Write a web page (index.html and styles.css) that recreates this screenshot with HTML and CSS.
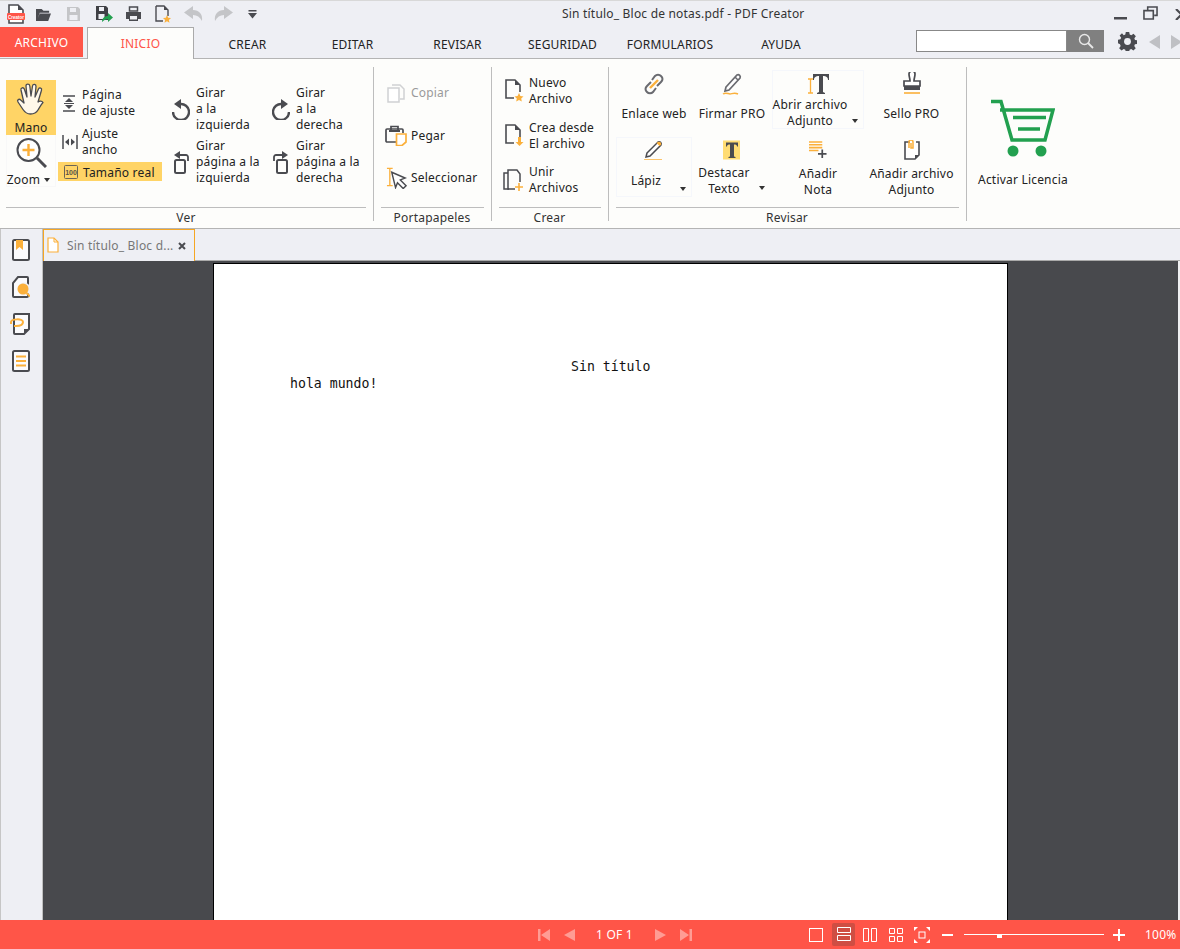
FILE: index.html
```html
<!DOCTYPE html>
<html lang="es">
<head>
<meta charset="utf-8">
<title>PDF Creator</title>
<link rel="stylesheet" href="styles.css">
</head>
<body>
<div class="app">
  <header class="titlebar">
    <div class="qat">
      <svg class="q1" viewBox="0 0 18 20"><path d="M2 1h9l5 5v13H2z" fill="#fff" stroke="#4a4b50" stroke-width="1.600"/><path d="M11 1v5h5z" fill="#4a4b50"/><rect x="0" y="9" width="18" height="7" rx="1" fill="#ff5548"/><text x="9" y="14.500" class="logo-t">Creator</text></svg>
      <svg class="q2" viewBox="0 0 18 16"><path d="M1 15V2h6l2 2h6v2H5L3 12l2-5h12l-3 8z" fill="#4a4b50"/></svg>
      <svg class="q3" viewBox="0 0 15 16"><path d="M1 1h11l2 2v12H1z" fill="#c4c5c8"/><rect x="4" y="2" width="6" height="4" fill="#eeeff4"/><rect x="3.500" y="9" width="8" height="5" fill="#eeeff4"/></svg>
      <svg class="q4" viewBox="0 0 18 18"><path d="M1 1h10l2 2v12H1z" fill="#3f4045"/><rect x="4" y="2" width="5" height="4" fill="#eeeff4"/><rect x="3.500" y="9" width="6" height="5" fill="#eeeff4"/><path d="M7 17c0-4 3-6 6-6V8l5 4.500-5 4.500v-3c-2 0-4 1-6 3z" fill="#22a04f"/></svg>
      <svg class="q5" viewBox="0 0 15 16"><rect x="3.500" y="1" width="8" height="4" fill="none" stroke="#4a4b50" stroke-width="1.500"/><path d="M0 6h15v7h-3v2H3v-2H0z" fill="#4a4b50"/><rect x="4" y="10" width="7" height="3.500" fill="#eeeff4"/></svg>
      <svg class="q6" viewBox="0 0 16 19"><path d="M1 1h8l4 4v6M8 16H1V1" fill="none" stroke="#4a4b50" stroke-width="1.400"/><path d="M9 5V1l4 4z" fill="#4a4b50"/><path d="M12 10l1.200 2.700 2.800.3-2.100 1.900.6 2.900-2.500-1.500-2.500 1.500.6-2.900L8 13l2.800-.3z" fill="#fbb03b"/></svg>
      <svg class="q7" viewBox="0 0 19 16"><path d="M9 0L0 6.500 9 13V9c4 0 7 2 9 6 1-7-3-11-9-11z" fill="#c4c5c8"/></svg>
      <svg class="q8" viewBox="0 0 19 16"><path d="M10 0l9 6.500L10 13V9c-4 0-7 2-9 6-1-7 3-11 9-11z" fill="#c4c5c8"/></svg>
      <svg class="q9" viewBox="0 0 9 9"><rect x="0.500" y="0" width="8" height="1.500" fill="#4a4b50"/><path d="M0 3h9L4.500 8.500z" fill="#4a4b50"/></svg>
    </div>
    <div class="doc-title">Sin título_ Bloc de notas.pdf - PDF Creator</div>
    <div class="winctl">
      <svg class="wmin" viewBox="0 0 13 3"><rect width="13" height="2.500" fill="#4a4b50"/></svg>
      <svg class="wres" viewBox="0 0 16 15"><path d="M1 5h10v9H1zM5 4V1h10v9h-3" fill="none" stroke="#4a4b50" stroke-width="1.700"/></svg>
      <svg class="wcls" viewBox="0 0 13 11"><path d="M1 0l11 11M12 0L1 11" stroke="#4a4b50" stroke-width="2.200"/></svg>
    </div>
  </header>

  <nav class="tabs">
    <div class="tab-file">ARCHIVO</div>
    <div class="tab-active">INICIO</div>
    <div class="tab t105 first">CREAR</div>
    <div class="tab t105">EDITAR</div>
    <div class="tab t105">REVISAR</div>
    <div class="tab t105">SEGURIDAD</div>
    <div class="tab t110">FORMULARIOS</div>
    <div class="tab t112">AYUDA</div>
    <div class="search">
      <div class="search-input"></div>
      <div class="search-btn"><svg viewBox="0 0 16 16"><circle cx="6.500" cy="6.500" r="5" fill="none" stroke="#e8e8e8" stroke-width="1.400"/><path d="M10 10l5 5" stroke="#e8e8e8" stroke-width="1.800"/></svg></div>
    </div>
    <svg class="gear" viewBox="0 0 20 20"><path d="M8.200 0h3.600l.5 2.700 1.700.7 2.300-1.500 2.500 2.500-1.600 2.300.7 1.700 2.600.5v3.600l-2.700.5-.7 1.700 1.600 2.300-2.500 2.500-2.300-1.600-1.700.7-.5 2.700H8.200l-.5-2.700-1.700-.7-2.300 1.600-2.500-2.500 1.600-2.300-.7-1.700L-.1 11.800V8.200l2.700-.5.7-1.700-1.600-2.300 2.500-2.500L6 3.400l1.700-.7z" fill="#4a4b50"/><circle cx="10" cy="10" r="3.600" fill="#eeeff4"/></svg>
    <svg class="arrow" viewBox="0 0 11 14"><path d="M11 0v14L0 7z" fill="#bfc0c4"/></svg>
    <svg class="arrow arrow-r" viewBox="0 0 11 14"><path d="M0 0v14l11-7z" fill="#bfc0c4"/></svg>
  </nav>

  <section class="ribbon">
    <div class="group g-ver">
      <div class="g-body ver-body">
        <div class="ver-c1">
          <div class="big-btn mano">
            <svg class="i-hand" viewBox="0 0 30 32"><path d="M8 20L5 7c-.5-2.500 2.500-3 3.300-1l2.700 8-1-11c0-2.500 3.500-2.500 3.800 0l1.200 10 1.500-10c.4-2.300 3.700-2 3.500.5L19 14l3.500-8c1-2 3.700-1 3 1.200L22 19c1.500-1.500 4-1 5 .5-2 2-3.500 5-5 7.500-1.500 2.500-4 4-7.500 4-3 0-5.500-1.500-7.500-4.500L2 19c-1.300-2 1-3.700 2.700-2z" fill="#fff8ea" stroke="#4a4b50" stroke-width="1.300" stroke-linejoin="round"/></svg>
            <span>Mano</span>
          </div>
          <div class="big-btn zoom">
            <svg class="i-zoom" viewBox="0 0 31 30"><circle cx="12.500" cy="12" r="11" fill="#fff" stroke="#4a4b50" stroke-width="2"/><path d="M21 20l9 9" stroke="#4a4b50" stroke-width="3"/><path d="M12.500 6v12M6.500 12h12" stroke="#fbb03b" stroke-width="2.400"/></svg>
            <span class="zoom-label">Zoom<i class="caret"></i></span>
          </div>
        </div>
        <div class="ver-c2">
          <div class="row r-pagina">
            <svg class="ic-fit" viewBox="0 0 14 17"><path d="M1 1h12M1 16h12" stroke="#4a4b50" stroke-width="1.500"/><path d="M7 3l4 4H3zM7 14l4-4H3z" fill="#4a4b50"/><path d="M2 8.500h10" stroke="#4a4b50"/></svg>
            <span>Página<br>de ajuste</span>
          </div>
          <div class="row r-ancho">
            <svg class="ic-width" viewBox="0 0 16 14"><path d="M1 0v14M15 0v14" stroke="#4a4b50" stroke-width="1.500"/><path d="M3 7l4-3.500v7zM13 7l-4-3.500v7z" fill="#4a4b50"/></svg>
            <span>Ajuste<br>ancho</span>
          </div>
          <div class="row r-real">
            <svg class="ic-100" viewBox="0 0 14 14"><rect x="0.500" y="0.500" width="13" height="13" rx="1" fill="none" stroke="#6b6456"/><text x="7" y="9.500" class="t100">100</text></svg>
            <span>Tamaño real</span>
          </div>
        </div>
        <div class="ver-c3">
          <div class="row rot">
            <svg class="ic-rot" viewBox="0 0 18 21"><path d="M8 5a8 8 0 1 1-7 8" fill="none" stroke="#4a4b50" stroke-width="2.400"/><path d="M9 0v10L2 5z" fill="#4a4b50"/></svg>
            <span>Girar<br>a la<br>izquierda</span>
          </div>
          <div class="row rot">
            <svg class="ic-rotp" viewBox="0 0 18 24"><rect x="3" y="10" width="10" height="13" rx="1.500" fill="none" stroke="#4a4b50" stroke-width="2"/><path d="M16 11V7a2 2 0 0 0-2-2H7" fill="none" stroke="#4a4b50" stroke-width="1.800"/><path d="M8 1v8L2 5z" fill="#4a4b50"/></svg>
            <span>Girar<br>página a la<br>izquierda</span>
          </div>
        </div>
        <div class="ver-c4">
          <div class="row rot">
            <svg class="ic-rot" viewBox="0 0 18 21"><path d="M10 5a8 8 0 1 0 7 8" fill="none" stroke="#4a4b50" stroke-width="2.400"/><path d="M9 0v10l7-5z" fill="#4a4b50"/></svg>
            <span>Girar<br>a la<br>derecha</span>
          </div>
          <div class="row rot">
            <svg class="ic-rotp" viewBox="0 0 18 24"><rect x="5" y="10" width="10" height="13" rx="1.500" fill="none" stroke="#4a4b50" stroke-width="2"/><path d="M2 11V7a2 2 0 0 1 2-2h7" fill="none" stroke="#4a4b50" stroke-width="1.800"/><path d="M10 1v8l6-4z" fill="#4a4b50"/></svg>
            <span>Girar<br>página a la<br>derecha</span>
          </div>
        </div>
      </div>
      <div class="g-label">Ver</div>
    </div>

    <div class="group g-port">
      <div class="g-body port-body">
        <div class="row r-copy disabled">
          <svg class="ic-copy" viewBox="0 0 18 19"><path d="M5 1h8l4 4v10h-4" fill="none" stroke="#d0d1d3" stroke-width="1.500"/><path d="M1 4h11v14H1z" fill="#fff" stroke="#d0d1d3" stroke-width="1.500"/></svg>
          <span>Copiar</span>
        </div>
        <div class="row r-paste">
          <svg class="ic-paste" viewBox="0 0 22 21"><path d="M11 17H2a1 1 0 0 1-1-1V5a1 1 0 0 1 1-1h15a1 1 0 0 1 1 1v3" fill="none" stroke="#4a4b50" stroke-width="1.700"/><path d="M6 5V1.500h7V5" fill="none" stroke="#4a4b50" stroke-width="1.700"/><rect x="4" y="5" width="11" height="2" fill="#4a4b50"/><path d="M11.500 9H21v8l-4 3.500h-5.500z" fill="#fff" stroke="#fbb03b" stroke-width="1.700"/></svg>
          <span>Pegar</span>
        </div>
        <div class="row r-sel">
          <svg class="ic-sel" viewBox="0 0 23 22"><path d="M1 1h6M1 19h6M4 1v18" stroke="#fbb03b" stroke-width="1.400" fill="none"/><path d="M6 5l14 6-5 2 6 6-3 3-6-6-2 5z" fill="#fff" stroke="#4a4b50" stroke-width="1.500"/></svg>
          <span>Seleccionar</span>
        </div>
      </div>
      <div class="g-label">Portapapeles</div>
    </div>

    <div class="group g-crear">
      <div class="g-body crear-body">
        <div class="row r-new">
          <svg class="ic-new" viewBox="0 0 20 24"><path d="M9 19H1V1h9l5 5v7" fill="none" stroke="#4a4b50" stroke-width="1.600"/><path d="M10 1v5h5z" fill="#4a4b50"/><path d="M14 14l1.400 3 3.100.4-2.300 2.100.6 3.100-2.800-1.600-2.800 1.600.6-3.100-2.300-2.100 3.100-.4z" fill="#fbb03b"/></svg>
          <span>Nuevo<br>Archivo</span>
        </div>
        <div class="row r-from">
          <svg class="ic-new" viewBox="0 0 20 24"><path d="M9 19H1V1h9l5 5v13h-1" fill="none" stroke="#4a4b50" stroke-width="1.600"/><path d="M10 1v5h5z" fill="#4a4b50"/><path d="M13 13h3v5h2.500l-4 4-4-4H13z" fill="#fbb03b"/></svg>
          <span>Crea desde<br>El archivo</span>
        </div>
        <div class="row r-join">
          <svg class="ic-join" viewBox="0 0 21 23"><path d="M6 20H1V4h4" fill="none" stroke="#4a4b50" stroke-width="1.500"/><path d="M12 20H5V1h9l3 4v8" fill="none" stroke="#4a4b50" stroke-width="1.500"/><path d="M16 14v8M12 18h8" stroke="#fbb03b" stroke-width="1.600"/></svg>
          <span>Unir<br>Archivos</span>
        </div>
      </div>
      <div class="g-label">Crear</div>
    </div>

    <div class="group g-rev">
      <div class="g-body rev-body">
        <div class="tool gap9">
          <svg class="ic-t" viewBox="0 0 24 24"><path d="M10 8l3-4a4 4 0 0 1 6 0c2 2 2 4 0 6l-4 4M14 16l-3 4a4 4 0 0 1-6 0c-2-2-2-4 0-6l4-4" fill="none" stroke="#6a6b70" stroke-width="2"/><path d="M8 16l8-8" stroke="#fbb03b" stroke-width="2.400"/></svg>
          <span>Enlace web</span>
        </div>
        <div class="tool gap9">
          <svg class="ic-t" viewBox="0 0 24 24"><path d="M6 15L17 3c2-1 4 1 3 3L9 18l-4 1z" fill="#fff" stroke="#6a6b70" stroke-width="1.700"/><path d="M15 5l3 3" stroke="#6a6b70" stroke-width="1.500"/><path d="M3 22c3-2 5 0 7 0s4-2 8 0" fill="none" stroke="#fbb03b" stroke-width="1.500"/></svg>
          <span>Firmar PRO</span>
        </div>
        <div class="tool gap1 boxed">
          <svg class="ic-t ic-wide" viewBox="0 0 22 24"><path d="M1 7h5M1 21h5M3.500 7v14" stroke="#fbb03b" stroke-width="1.300" fill="none"/><path d="M6 2h16v6h-1c0-3-2-4-5-4v16l2 1v1h-8v-1l2-1V4C9 4 7 5 7 8H6z" fill="#4a4b50"/></svg>
          <span class="off8">Abrir archivo<br>Adjunto</span>
          <i class="caret drop"></i>
        </div>
        <div class="tool gap9">
          <svg class="ic-t" viewBox="0 0 24 24"><path d="M9 2a3 3 0 0 1 6 0c0 3-1 4-1 7h6v5H4V9h6c0-3-1-4-1-7z" fill="#fff" stroke="#4a4b50" stroke-width="1.700"/><rect x="4" y="14" width="16" height="4" fill="#4a4b50"/><path d="M4 21h16" stroke="#fbb03b" stroke-width="1.600"/></svg>
          <span>Sello PRO</span>
        </div>
        <div class="tool boxed gap-pen">
          <svg class="ic-pen" viewBox="0 0 20 20"><path d="M3 13L14 2c2-1 4 1 3 3L6 16l-4 1z" fill="#fff" stroke="#4a4b50" stroke-width="1.500"/><path d="M14 2c2-1 4 1 3 3l-1.500 1-3-3z" fill="#fbb03b"/><path d="M0 20h18" stroke="#fbb03b" stroke-width="1.500"/></svg>
          <span class="shift">Lápiz</span>
          <i class="caret drop2"></i>
        </div>
        <div class="tool gap4">
          <svg class="ic-hl" viewBox="0 0 18 19"><rect width="17" height="19" fill="#ffdc73"/><path d="M3 2h12v4h-1c0-1.500-1-2-3-2v12l1.500.5v1h-7v-1L7 16V4C5 4 4 4.500 4 6H3z" fill="#4a4b50"/></svg>
          <span class="off8">Destacar<br>Texto</span>
          <i class="caret drop3"></i>
        </div>
        <div class="tool gap5">
          <svg class="ic-hl" viewBox="0 0 19 19"><path d="M0 1h14M0 4h14M0 7h14M0 10h10" stroke="#fbb03b" stroke-width="1.600"/><path d="M14 9v9M9.500 13.500h9" stroke="#4a4b50" stroke-width="1.800"/></svg>
          <span>Añadir<br>Nota</span>
        </div>
        <div class="tool gap5">
          <svg class="ic-hl" viewBox="0 0 16 20"><path d="M6 2H1v17h10l4-4V2h-3" fill="#fff" stroke="#4a4b50" stroke-width="1.600"/><path d="M5 8V2a2 2 0 0 1 4 0v6h-2V3" fill="none" stroke="#fbb03b" stroke-width="1.500"/><path d="M11 19v-4h4z" fill="#4a4b50"/></svg>
          <span>Añadir archivo<br>Adjunto</span>
        </div>
      </div>
      <div class="g-label">Revisar</div>
    </div>

    <div class="group-last">
      <svg class="ic-cart" viewBox="0 0 64 58"><path d="M0 2.500h10L21 41h33l8-30H9" fill="none" stroke="#22a04f" stroke-width="3.500"/><path d="M22 18.500h33M27 30h22" stroke="#22a04f" stroke-width="3.500"/><circle cx="22" cy="52" r="5.500" fill="#22a04f"/><circle cx="50" cy="52" r="5.500" fill="#22a04f"/></svg>
      <span>Activar Licencia</span>
    </div>
  </section>

  <div class="workspace">
    <aside class="sidebar">
      <svg class="side-i" viewBox="0 0 20 22"><rect x="3" y="1" width="16" height="20" rx="1.500" fill="#fbfbfd" stroke="#4a4b50" stroke-width="2"/><path d="M6 1h7v10l-3.500-3L6 11z" fill="#fbb03b"/></svg>
      <svg class="side-i" viewBox="0 0 20 22"><path d="M8 1h9a1 1 0 0 1 1 1v18a1 1 0 0 1-1 1H4a1 1 0 0 1-1-1V7z" fill="#fbfbfd" stroke="#4a4b50" stroke-width="2"/><circle cx="14" cy="13" r="6.500" fill="#eeeff4"/><circle cx="13" cy="13" r="5.500" fill="#fbb03b"/><path d="M16.500 17l3.500 3.500" stroke="#fbb03b" stroke-width="2"/></svg>
      <svg class="side-i" viewBox="0 0 20 22"><path d="M5 1h14v15l-5 5H5a1 1 0 0 1-1-1V2a1 1 0 0 1 1-1z" fill="#fbfbfd" stroke="#4a4b50" stroke-width="2"/><path d="M14 21v-5h5z" fill="#4a4b50"/><path d="M1 11V9c0-3 12-4 12 0 0 3-4 4-7 4H4" fill="none" stroke="#fbb03b" stroke-width="2"/></svg>
      <svg class="side-i" viewBox="0 0 20 22"><rect x="3" y="1" width="16" height="20" rx="1.500" fill="#fbfbfd" stroke="#4a4b50" stroke-width="2"/><path d="M6 6.500h10M6 11h10M6 15.500h10" stroke="#fbb03b" stroke-width="2"/></svg>
    </aside>
    <div class="doc-col">
      <div class="docstrip">
        <div class="doctab">
          <svg class="doctab-i" viewBox="0 0 12 16"><path d="M1 1h6l4 4v10H1z" fill="#fff" stroke="#fbb03b" stroke-width="1.200"/><path d="M7 1v4h4" fill="none" stroke="#fbb03b"/></svg>
          <span class="doctab-t">Sin título_ Bloc d...</span>
          <svg class="doctab-x" viewBox="0 0 8 8"><path d="M1 1l6 6M7 1L1 7" stroke="#4a4b50" stroke-width="2"/></svg>
        </div>
      </div>
      <main class="viewer">
        <div class="page">
          <div class="pg-title">Sin título</div>
          <div class="pg-line">hola mundo!</div>
        </div>
      </main>
    </div>
  </div>

  <footer class="status">
    <div class="nav-pages">
      <svg class="nv" viewBox="0 0 12 12"><path d="M0 0h2.500v12H0zM12 0v12L3 6z" fill="#ff9c94"/></svg>
      <svg class="nv nv2" viewBox="0 0 11 12"><path d="M11 0v12L0 6z" fill="#ff9c94"/></svg>
      <span class="pg-num">1 OF 1</span>
      <svg class="nv nv3" viewBox="0 0 11 12"><path d="M0 0v12l11-6z" fill="#ff9c94"/></svg>
      <svg class="nv nv4" viewBox="0 0 12 12"><path d="M12 0H9.500v12H12zM0 0v12l9-6z" fill="#ff9c94"/></svg>
    </div>
    <div class="view-btns">
      <svg class="vb v1" viewBox="0 0 14 14"><rect x="0.500" y="0.500" width="13" height="13" fill="none" stroke="#fff"/></svg>
      <span class="vb-on"><svg class="vb" viewBox="0 0 14 14"><path d="M.5.500h13v5H.5zM.5 8.500h13v5H.5z" fill="none" stroke="#fff"/></svg></span>
      <svg class="vb v3" viewBox="0 0 14 14"><path d="M.5.500h5v13h-5zM8.500.500h5v13h-5z" fill="none" stroke="#fff"/></svg>
      <svg class="vb v4" viewBox="0 0 14 14"><path d="M.5.500h5v5h-5zM8.500.500h5v5h-5zM.5 8.500h5v5h-5zM8.500 8.500h5v5h-5z" fill="none" stroke="#fff"/></svg>
      <svg class="vb v5" viewBox="0 0 16 16"><path d="M0 0h4L0 4zM16 0h-4l4 4zM0 16h4l-4-4zM16 16h-4l4-4z" fill="#fff"/><rect x="5" y="5" width="6" height="6" fill="none" stroke="#fff"/></svg>
    </div>
    <div class="zoomer">
      <span class="z-minus"></span>
      <div class="z-track"><span class="z-thumb"></span></div>
      <span class="z-plus"></span>
      <span class="z-val">100%</span>
    </div>
  </footer>
</div>
</body>
</html>
```

FILE: styles.css
```css
* { box-sizing: border-box; }
html, body { margin: 0; padding: 0; }
body { width: 1180px; height: 949px; overflow: hidden; font: 12px/16px "Noto Sans", sans-serif; letter-spacing: .2px; color: #222; background: #eeeff4; }
svg { display: block; flex: none; }
.app { display: flex; flex-direction: column; height: 949px; }
.logo-t { font: bold 4.500px "Liberation Sans", sans-serif; fill: #fff; text-anchor: middle; letter-spacing: 0; }
.t100 { font: bold 7px "Liberation Sans", sans-serif; fill: #5a5346; text-anchor: middle; letter-spacing: 0; }

.titlebar { height: 27px; display: flex; align-items: center; border-top: 1px solid #d8d8d8; background: #eeeff4; }
.qat { display: flex; align-items: center; padding-left: 7px; width: 562px; }
.q1 { width: 18px; height: 20px; margin-right: 10px; }
.q2 { width: 17px; height: 15px; margin-right: 14px; }
.q3 { width: 15px; height: 16px; margin-right: 14px; }
.q4 { width: 18px; height: 18px; margin-right: 13px; }
.q5 { width: 15px; height: 16px; margin-right: 14px; }
.q6 { width: 16px; height: 19px; margin-right: 13px; }
.q7 { width: 19px; height: 16px; margin-right: 11px; }
.q8 { width: 19px; height: 16px; margin-right: 15px; }
.q9 { width: 9px; height: 9px; }
.doc-title { width: 241px; white-space: nowrap; color: #333; }
.winctl { margin-left: auto; display: flex; align-items: center; }
.wmin { width: 13px; height: 3px; margin: 8px 16px 0 0; }
.wres { width: 15px; height: 14px; margin: -3px 17px 0 0; }
.wcls { width: 13px; height: 11px; margin-right: -8px; }

.tabs { height: 32px; display: flex; background: #eeeff4; border-bottom: 1px solid #b4b4b4; align-items: flex-start; }
.tab-file { width: 83px; height: 30px; background: #ff5548; color: #fff; text-align: center; line-height: 31px; }
.tab-active { width: 107px; height: 32px; margin-left: 4px; background: #fdfdfb; color: #ff5548; border: 1px solid #aaa; border-bottom: 0; text-align: center; line-height: 32px; }
.tab { text-align: center; line-height: 36px; color: #222; flex: none; }
.first { margin-left: 1px; }
.t105 { width: 105px; }
.t110 { width: 110px; }
.t112 { width: 112px; }
.search { display: flex; margin: 3px 0 0 auto; width: 188px; height: 22px; }
.search-input { flex: 1; background: #fff; border: 1px solid #888; }
.search-btn { width: 37px; background: #808080; display: flex; align-items: center; justify-content: center; }
.search-btn svg { width: 16px; height: 16px; }
.gear { width: 19px; height: 19px; margin: 5px 0 0 14px; }
.arrow { width: 11px; height: 14px; margin: 8px 0 0 12px; }
.arrow-r { margin-left: 11px; margin-right: -2px; }

.ribbon { height: 170px; background: #fdfdfb; display: flex; padding-top: 8px; border-bottom: 1px solid #b4b4b4; }
.group { height: 154px; padding: 0 7px 0 6px; border-right: 1px solid #bdbdbd; display: flex; flex-direction: column; }
.g-ver { width: 374px; }
.g-port { width: 118px; }
.g-crear { width: 117px; }
.g-rev { width: 358px; }
.g-body { height: 141px; border-bottom: 1px solid #bdbdbd; }
.g-label { text-align: center; height: 13px; line-height: 20px; color: #333; }
.row { display: flex; align-items: center; }

.ver-body { display: flex; width: 360px; }
.ver-c1 { width: 52px; padding-top: 13px; }
.ver-c2 { width: 112px; padding-top: 20px; }
.ver-c3 { width: 100px; padding-top: 18px; display: flex; flex-direction: column; gap: 5px; }
.ver-c4 { width: 96px; padding-top: 18px; display: flex; flex-direction: column; gap: 5px; }
.big-btn { width: 50px; display: flex; flex-direction: column; align-items: center; }
.mano { height: 55px; background: #ffd466; padding-top: 3px; }
.mano span { margin-top: 1px; }
.i-hand { width: 30px; height: 32px; margin-bottom: 4px; }
.zoom { height: 52px; padding-top: 3px; border: 1px solid #f8f8f8; border-top: 0; }
.i-zoom { width: 31px; height: 30px; margin: 0 0 4px 0; }
.zoom-label { display: flex; align-items: center; margin-right: 5px; }
.caret { display: inline-block; width: 0; height: 0; border: 3.500px solid transparent; border-top: 4px solid #333; border-bottom: 0; margin-left: 4px; }
.r-pagina { height: 32px; padding-left: 4px; }
.r-pagina span { margin-left: 6px; }
.ic-fit { width: 14px; height: 17px; }
.r-ancho { height: 32px; margin-top: 7px; padding-left: 4px; }
.r-ancho span { margin-left: 4px; }
.ic-width { width: 16px; height: 14px; }
.r-real { width: 104px; height: 19px; margin-top: 4px; background: #ffd466; padding-left: 6px; }
.ic-100 { width: 14px; height: 14px; }
.r-real span { margin: 3px 0 0 5px; color: #222; }
.rot { height: 48px; padding-left: 2px; }
.rot span { margin-left: 6px; }
.ic-rot { width: 18px; height: 21px; }
.ic-rotp { width: 18px; height: 24px; }

.port-body { width: 103px; margin-left: 1px; padding-top: 17px; display: flex; flex-direction: column; }
.r-copy { height: 18px; padding-left: 6px; }
.r-copy span { margin-left: 6px; color: #9a9a9a; }
.ic-copy { width: 18px; height: 19px; }
.r-paste { height: 21px; margin-top: 23px; padding-left: 4px; }
.r-paste span { margin-left: 4px; }
.ic-paste { width: 22px; height: 21px; }
.r-sel { height: 22px; margin-top: 21px; padding-left: 5px; }
.r-sel span { margin-left: 3px; }
.ic-sel { width: 22px; height: 22px; }

.crear-body { width: 102px; margin-left: 1px; padding-top: 8px; display: flex; flex-direction: column; }
.r-new { height: 32px; padding-left: 6px; }
.r-new span { margin-left: 4px; }
.r-from { height: 32px; margin-top: 13px; padding-left: 6px; }
.r-from span { margin-left: 4px; }
.ic-new { width: 20px; height: 24px; }
.r-join { height: 32px; margin-top: 12px; padding-left: 4px; }
.r-join span { margin-left: 5px; }
.ic-join { width: 21px; height: 23px; }

.rev-body { width: 343px; margin-left: 1px; padding-top: 3px; display: grid; grid-template-columns: 76px 80px 92px 95px; grid-template-rows: 59px 60px; row-gap: 8px; }
.tool { position: relative; display: flex; flex-direction: column; align-items: center; text-align: center; padding-top: 2px; white-space: nowrap; }
.boxed { border: 1px solid #f5f7fb; padding-top: 1px; }
.ic-t { width: 24px; height: 24px; }
.ic-wide { width: 22px; }
.ic-pen { width: 20px; height: 20px; margin-top: 1px; }
.ic-hl { height: 20px; width: 18px; margin-top: 1px; }
.gap9 span { margin-top: 10px; }
.gap1 span { margin-top: 1px; }
.gap-pen .shift { margin: 13px 16px 0 0; }
.gap4 span { margin-top: 5px; }
.gap5 span { margin-top: 6px; }
.gap1 .off8, .gap4 .off8 { margin-right: 16px; }
.caret.drop, .caret.drop2, .caret.drop3 { position: absolute; margin: 0; }
.drop { right: 5px; top: 48px; }
.drop2 { right: 5px; top: 49px; }
.drop3 { right: 7px; top: 49px; }

.group-last { width: 112px; padding: 32px 0 0 0; display: flex; flex-direction: column; align-items: center; }
.ic-cart { width: 64px; height: 58px; margin: 0 0 15px 0; }

.workspace { flex: 1; display: flex; min-height: 0; }
.sidebar { width: 43px; flex: none; background: #eeeff4; border-left: 1px solid #c6c6c6; border-right: 1px solid #c0c0c0; padding: 10px 0 0 9px; display: flex; flex-direction: column; gap: 15px; }
.side-i { width: 20px; height: 22px; }
.doc-col { flex: 1; display: flex; flex-direction: column; min-width: 0; }
.docstrip { height: 32px; background: #eeeff4; border-bottom: 1px solid #aaa; }
.doctab { width: 152px; height: 32px; background: #eeeff4; border: 1px solid #f5a623; border-bottom: 0; display: flex; align-items: center; padding-left: 3px; }
.doctab-i { width: 12px; height: 16px; margin-top: -2px; }
.doctab-t { margin-left: 8px; color: #777; width: 106px; white-space: nowrap; }
.doctab-x { width: 8px; height: 8px; margin-left: 5px; }
.viewer { flex: 1; background: #48494d; padding: 2px 0 0 170px; overflow: hidden; border-right: 2px solid #f0f0f2; }
.page { width: 795px; height: 700px; background: #fff; border: 1px solid #000; padding-top: 94px; font: 13.2px/17px "DejaVu Sans Mono", monospace; letter-spacing: 0; color: #111; }
.pg-title { padding-left: 357px; }
.pg-line { padding-left: 76px; }

.status { height: 29px; background: #ff5548; display: flex; align-items: center; color: #fff; }
.nav-pages { display: flex; align-items: center; margin-left: 538px; width: 271px; flex: none; }
.nv { width: 12px; height: 12px; }
.nv2 { width: 11px; margin-left: 14px; }
.pg-num { margin-left: 21px; width: 59px; white-space: nowrap; }
.nv3 { width: 11px; }
.nv4 { margin-left: 14px; }
.view-btns { display: flex; align-items: center; flex: none; }
.vb { width: 14px; height: 14px; }
.v1 { margin-right: 9px; }
.vb-on { width: 23px; height: 23px; background: #cf4e43; border-radius: 2px; padding: 4px 4.500px; display: block; }
.v3 { margin-left: 8px; }
.v4 { margin-left: 12px; }
.v5 { margin-left: 11px; width: 16px; height: 16px; }
.zoomer { display: flex; align-items: center; margin-left: 12px; flex: none; }
.z-minus { width: 11px; height: 2px; background: #fff; }
.z-track { position: relative; width: 140px; height: 1px; background: #fff; margin-left: 11px; }
.z-thumb { position: absolute; left: 33px; top: 0; width: 5px; height: 4px; background: #fff; }
.z-plus { width: 12px; height: 12px; margin-left: 9px; background: linear-gradient(#fff,#fff) center/12px 2px no-repeat, linear-gradient(#fff,#fff) center/2px 12px no-repeat; }
.z-val { margin-left: 20px; white-space: nowrap; }
```
